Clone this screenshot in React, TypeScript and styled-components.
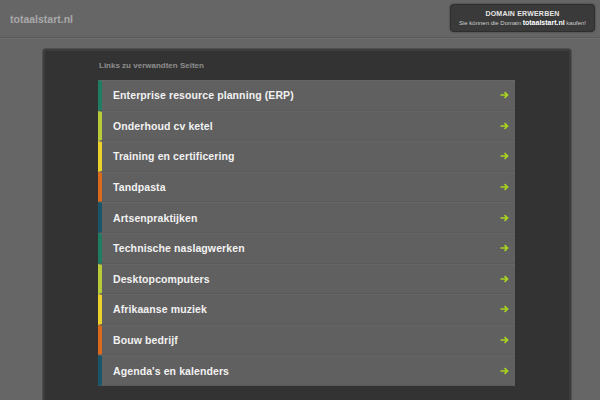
import React from "react";
import styled, { createGlobalStyle } from "styled-components";

const GlobalStyle = createGlobalStyle`
  html, body {
    margin: 0;
    padding: 0;
    background: #666666;
    font-family: "Liberation Sans", Arial, sans-serif;
    overflow: hidden;
  }
`;

type Link = { label: string; color: string };

const links: Link[] = [
  { label: "Enterprise resource planning (ERP)", color: "#1f7d62" },
  { label: "Onderhoud cv ketel", color: "#b8cc3a" },
  { label: "Training en certificering", color: "#ead12c" },
  { label: "Tandpasta", color: "#dc6a1c" },
  { label: "Artsenpraktijken", color: "#1a566a" },
  { label: "Technische naslagwerken", color: "#1f7d62" },
  { label: "Desktopcomputers", color: "#b8cc3a" },
  { label: "Afrikaanse muziek", color: "#ead12c" },
  { label: "Bouw bedrijf", color: "#dc6a1c" },
  { label: "Agenda's en kalenders", color: "#1a566a" },
];

const Header = styled.header`
  height: 37px;
  display: flex;
  align-items: center;
  justify-content: space-between;
  padding: 0 5px 0 10px;
  border-bottom: 1px solid #5a5a5a;
  box-shadow: 0 1px 0 #6e6e6e;
`;

const SiteName = styled.div`
  color: #a9a9a9;
  font-size: 10.5px;
  font-weight: bold;
  margin-top: 1px;
`;

const DomainBox = styled.div`
  width: 145px;
  height: 28px;
  margin-top: -2px;
  box-sizing: border-box;
  background: #3a3a3a;
  border: 1px solid #2e2e2e;
  border-radius: 4px;
  box-shadow: 0 0 2px rgba(0, 0, 0, 0.5);
  color: #e6e6e6;
  display: flex;
  flex-direction: column;
  align-items: center;
  justify-content: center;
  gap: 2px;
`;

const DomainTitle = styled.div`
  font-size: 7px;
  font-weight: bold;
  letter-spacing: 0.2px;
`;

const DomainText = styled.div`
  font-size: 6px;
  color: #cfcfcf;
  b {
    font-size: 7px;
    color: #fff;
  }
`;

const Main = styled.main`
  padding: 10px 28px 0 42px;
`;

const Panel = styled.section`
  height: 400px;
  background: #333333;
  border: 1px solid #4f4f4f;
  border-radius: 4px;
  box-shadow: inset 0 0 0 2px #3d3d3d;
  padding: 12px 56px 0 55px;
`;

const SectionTitle = styled.h2`
  margin: 0 0 10px 1px;
  font-size: 8px;
  font-weight: bold;
  color: #8e8e8e;
`;

const List = styled.ul`
  list-style: none;
  margin: 0;
  padding: 0;
  background: #606060;
`;

const Row = styled.li<{ $bar: string }>`
  height: 30.6px;
  box-sizing: border-box;
  display: flex;
  align-items: center;
  justify-content: space-between;
  padding: 0 6px 0 11px;
  border-left: 4px solid ${(p) => p.$bar};
  border-bottom: 1px solid #5a5a5a;
  border-top: 1px solid #666666;
  color: #f2f2f2;
  font-size: 10.5px;
  font-weight: bold;
  letter-spacing: 0.1px;
`;

const Arrow = () => (
  <svg width="9" height="8" viewBox="0 0 9 8">
    <path d="M0.5 4H7M4.5 1.2L7.5 4L4.5 6.8" stroke="#a9d41c" strokeWidth="1.7" fill="none" />
  </svg>
);

export default function App() {
  return (
    <>
      <GlobalStyle />
      <Header>
        <SiteName>totaalstart.nl</SiteName>
        <DomainBox>
          <DomainTitle>DOMAIN ERWERBEN</DomainTitle>
          <DomainText>
            Sie können die Domain <b>totaalstart.nl</b> kaufen!
          </DomainText>
        </DomainBox>
      </Header>
      <Main>
        <Panel>
          <SectionTitle>Links zu verwandten Seiten</SectionTitle>
          <List>
            {links.map((l) => (
              <Row key={l.label} $bar={l.color}>
                <span>{l.label}</span>
                <Arrow />
              </Row>
            ))}
          </List>
        </Panel>
      </Main>
    </>
  );
}
